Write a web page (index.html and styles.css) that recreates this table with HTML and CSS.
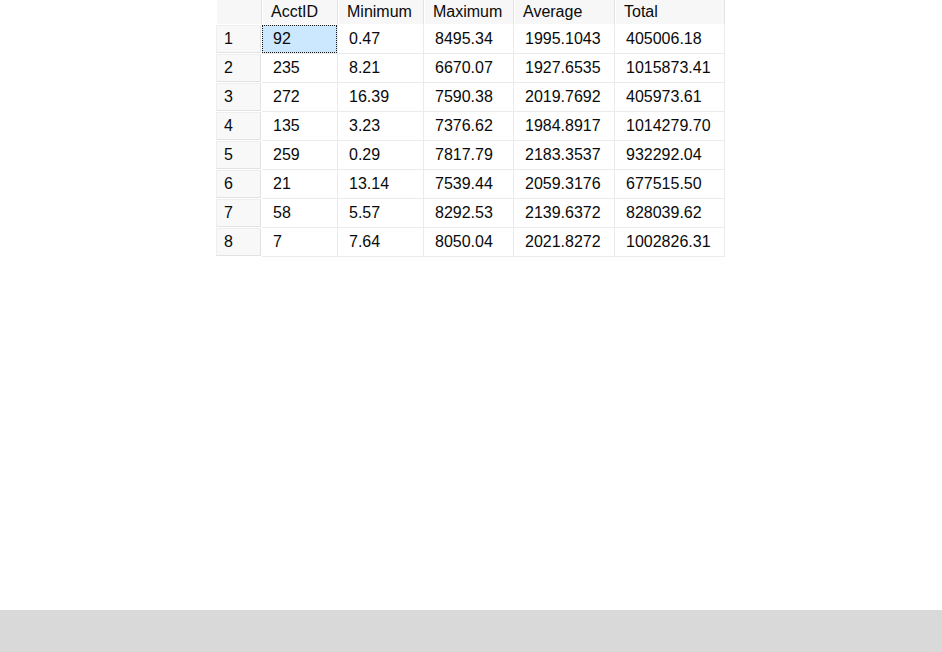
FILE: index.html
```html
<!DOCTYPE html>
<html>
<head>
<meta charset="utf-8">
<link rel="stylesheet" href="styles.css">
</head>
<body>
<div class="page">
  <div class="content">
    <table class="grid">
      <colgroup>
        <col class="c-rh"><col class="c-id"><col class="c-min"><col class="c-max"><col class="c-avg"><col class="c-tot">
      </colgroup>
      <thead>
        <tr><th class="corner"></th><th>AcctID</th><th>Minimum</th><th>Maximum</th><th>Average</th><th>Total</th></tr>
      </thead>
      <tbody>
        <tr><td class="rh"><span>1</span></td><td class="sel"><span>92</span></td><td>0.47</td><td>8495.34</td><td>1995.1043</td><td>405006.18</td></tr>
        <tr><td class="rh"><span>2</span></td><td>235</td><td>8.21</td><td>6670.07</td><td>1927.6535</td><td>1015873.41</td></tr>
        <tr><td class="rh"><span>3</span></td><td>272</td><td>16.39</td><td>7590.38</td><td>2019.7692</td><td>405973.61</td></tr>
        <tr><td class="rh"><span>4</span></td><td>135</td><td>3.23</td><td>7376.62</td><td>1984.8917</td><td>1014279.70</td></tr>
        <tr><td class="rh"><span>5</span></td><td>259</td><td>0.29</td><td>7817.79</td><td>2183.3537</td><td>932292.04</td></tr>
        <tr><td class="rh"><span>6</span></td><td>21</td><td>13.14</td><td>7539.44</td><td>2059.3176</td><td>677515.50</td></tr>
        <tr><td class="rh"><span>7</span></td><td>58</td><td>5.57</td><td>8292.53</td><td>2139.6372</td><td>828039.62</td></tr>
        <tr><td class="rh"><span>8</span></td><td>7</td><td>7.64</td><td>8050.04</td><td>2021.8272</td><td>1002826.31</td></tr>
      </tbody>
    </table>
  </div>
  <div class="statusbar"></div>
</div>
</body>
</html>
```
FILE: styles.css
```css
html, body {
  margin: 0;
  padding: 0;
  background: #ffffff;
}
.page {
  width: 942px;
  height: 652px;
  display: flex;
  flex-direction: column;
}
.content {
  flex: 1;
  padding-left: 216px;
}
.statusbar {
  height: 42px;
  background: #d9d9d9;
}
.grid {
  border-collapse: separate;
  border-spacing: 0;
  table-layout: fixed;
  width: 509px;
  font-family: "Liberation Sans", Arial, sans-serif;
  font-size: 16px;
  color: #0a0a0a;
}
.c-rh { width: 46px; }
.c-id { width: 76px; }
.c-min { width: 86px; }
.c-max { width: 90px; }
.c-avg { width: 101px; }
.c-tot { width: 110px; }
.grid th {
  height: 24px;
  padding: 0 0 0 9px;
  text-align: left;
  font-weight: normal;
  background: #f7f7f7;
  border-right: 1px solid #e3e3e3;
  border-bottom: 1px solid #ffffff;
  box-shadow: inset 1px 0 0 #ffffff;
  white-space: nowrap;
  vertical-align: middle;
}
.grid th.corner {
  border-right: 1px solid #e3e3e3;
}
.grid td {
  height: 28px;
  padding: 0 0 0 11px;
  border-right: 1px solid #ebebeb;
  border-bottom: 1px solid #ebebeb;
  white-space: nowrap;
  vertical-align: middle;
}
.grid td.rh {
  padding: 0;
  border-right: 1px solid #ffffff;
  border-bottom: 1px solid #ffffff;
}
.grid td.rh span {
  display: flex;
  align-items: center;
  height: 26px;
  padding-left: 7px;
  background: #f8f8f8;
  border: 1px solid #e2e2e2;
  border-left-color: #eeeeee;
  border-top-color: #eeeeee;
}
.grid td.sel {
  padding: 0;
  background: #ffffff;
}
.grid td.sel span {
  display: flex;
  align-items: center;
  height: 26px;
  padding-left: 10px;
  background: #cce8ff;
  border: 1px dotted #1a1a1a;
}
```
